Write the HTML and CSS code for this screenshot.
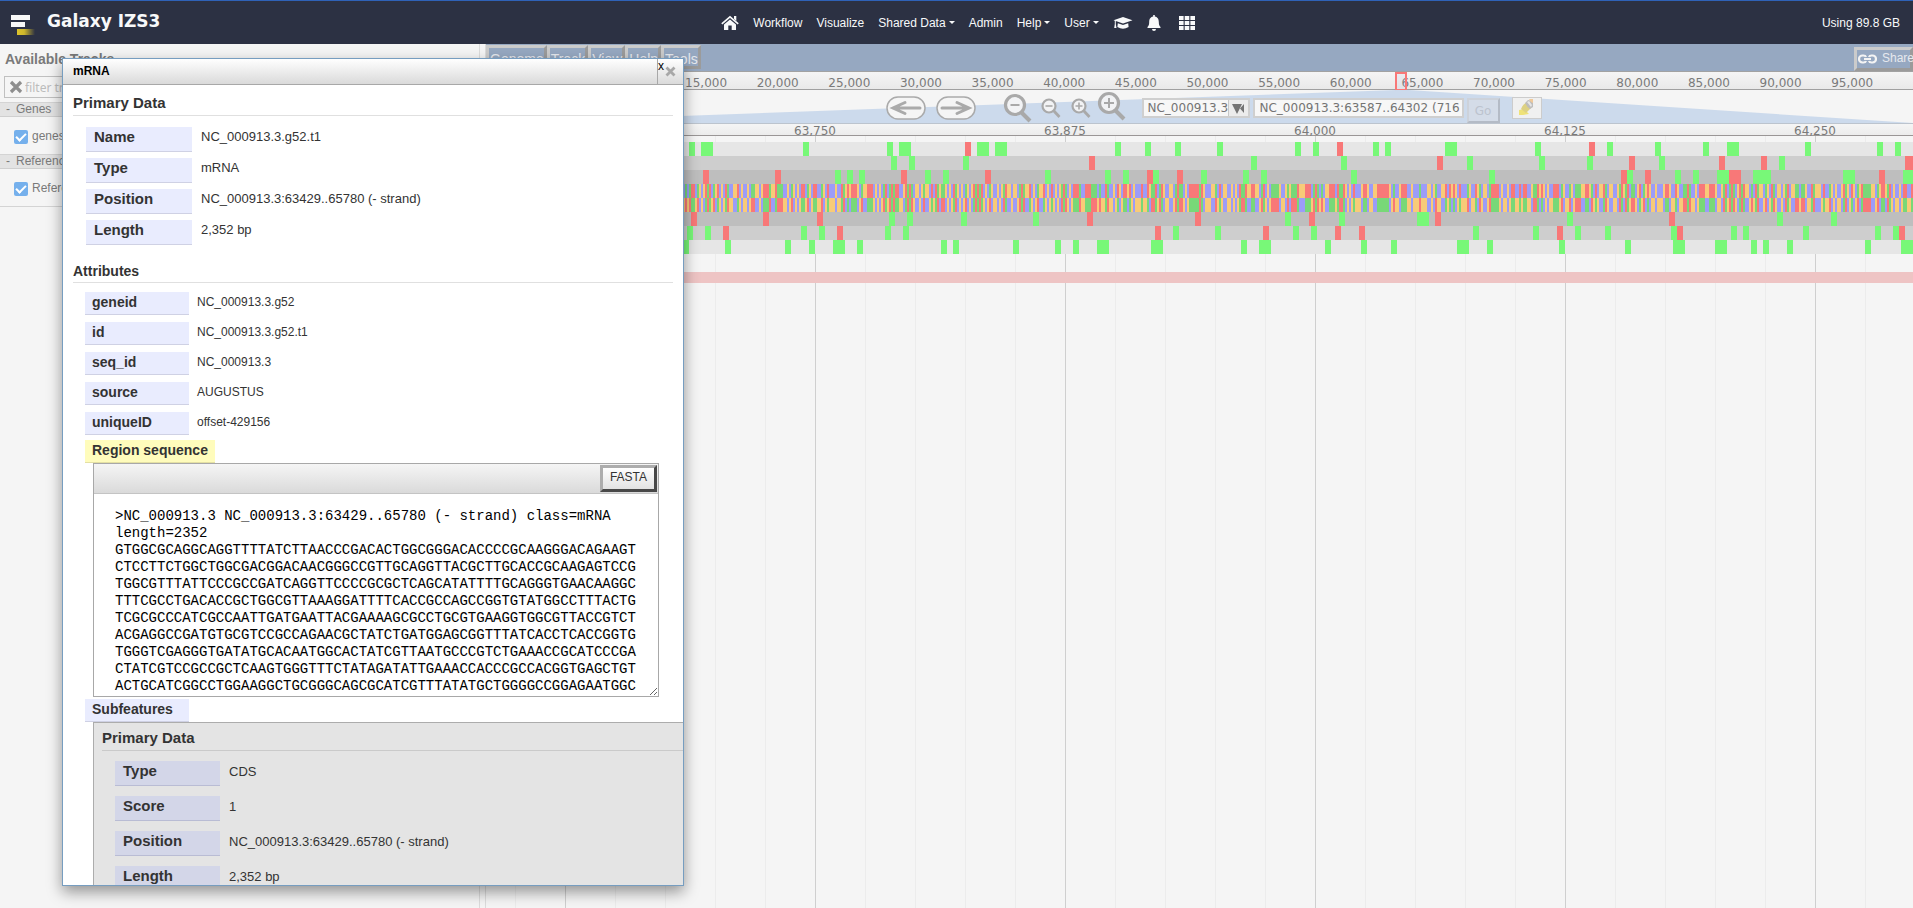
FILE: index.html
```html
<!DOCTYPE html>
<html lang="en">
<head>
<meta charset="utf-8">
<title>Galaxy IZS3</title>
<link rel="stylesheet" href="styles.css">
</head>
<body>
<header class="masthead">
  <a class="brand" href="#">
    <svg class="brand-logo" width="26" height="22" viewBox="0 0 26 22" aria-hidden="true">
      <defs><linearGradient id="gold"><stop offset="0" stop-color="#dcc32c"/><stop offset=".4" stop-color="#cdb62c"/><stop offset="1" stop-color="#2c3143"/></linearGradient></defs>
      <rect x="1" y="1" width="19" height="5" fill="#f8f8f8"/>
      <rect x="1" y="8" width="14" height="5" fill="#f8f8f8"/>
      <rect x="7" y="15" width="18" height="6" fill="url(#gold)"/>
    </svg>
    <span>Galaxy IZS3</span>
  </a>
  <nav class="main-nav">
    <a href="#" aria-label="Home"><svg width="18" height="16" viewBox="0 0 18 16" fill="#f8f9fa"><path d="M9 4.600 15 9.500V15h-4.300v-4.500H7.300V15H3V9.500z"/><path d="M.8 8.800 9 1.900l8.200 6.900" fill="none" stroke="#f8f9fa" stroke-width="1.700"/><path d="M13 1h2.300v5L13 4z"/></svg></a>
    <a href="#">Workflow</a>
    <a href="#">Visualize</a>
    <a class="caret" href="#">Shared Data</a>
    <a href="#">Admin</a>
    <a class="caret" href="#">Help</a>
    <a class="caret" href="#">User</a>
    <a href="#" aria-label="Tours"><svg width="20" height="16" viewBox="0 0 20 16" fill="#f8f9fa"><path d="M10 2 19.500 5.300 10 8.600 2.800 6.100v3l.7 4H1.200l.6-4V5.700L.5 5.300z"/><path d="M4.800 8.300 10 10l5.200-1.700.4 3.700q-5.600 3.500-11.200 0z"/></svg></a>
    <a href="#" aria-label="Notifications"><svg width="14" height="16" viewBox="0 0 14 16" fill="#f8f9fa"><path d="M6.200 0h1.600v1.500C11 2.200 11.800 4.500 11.800 7c0 3 .8 4 1.700 5v1H.5v-1c.9-1 1.700-2 1.700-5 0-2.500.8-4.800 4-5.500zM5 14h4a2 2 0 0 1-4 0z"/></svg></a>
    <a class="apps" href="#" aria-label="Apps"><svg width="16" height="16" viewBox="0 0 16 16" fill="#f8f9fa"><path d="M0 1h4.600v4H0zM5.700 1h4.600v4H5.700zM11.400 1H16v4h-4.600zM0 6h4.600v4H0zM5.700 6h4.600v4H5.700zM11.400 6H16v4h-4.600zM0 11h4.600v4H0zM5.700 11h4.600v4H5.700zM11.400 11H16v4h-4.600z"/></svg></a>
  </nav>
  <a class="quota" href="#">Using 89.8 GB</a>
</header>

<div class="workspace">
  <aside class="tracks">
    <h2>Available Tracks</h2>
    <div class="filter">
      <svg width="14" height="14" viewBox="0 0 14 14"><path d="M2 2l10 10M12 2l-10 10" stroke="#8e8e8e" stroke-width="3.200"/></svg>
      <input type="text" placeholder="filter tracks" aria-label="filter tracks">
    </div>
    <h3><span>-</span>Genes</h3>
    <label><input type="checkbox" checked>genes</label>
    <h3><span>-</span>Reference sequence</h3>
    <label><input type="checkbox" checked>Reference sequence</label>
  </aside>

  <main class="browser">
    <div class="menubar">
      <div class="menus">
        <button type="button">Genome</button><button type="button">Track</button><button type="button">View</button><button type="button">Help</button><button type="button">Tools</button>
      </div>
      <button class="share" type="button"><svg width="19" height="10" viewBox="0 0 19 10" fill="none" stroke="#f4f4f4" stroke-width="2.200"><path d="M8 3Q7.500 1.500 5.500 1.500h-1a3.500 3.500 0 0 0 0 7h1Q7.500 8.500 8 7M11 3q.5-1.500 2.500-1.500h1a3.500 3.500 0 0 1 0 7h-1Q11.500 8.500 11 7M6 5h7"/></svg>Share</button>
    </div>
    <div class="overview">
      <span>5,000</span><span>10,000</span><span>15,000</span><span>20,000</span><span>25,000</span><span>30,000</span><span>35,000</span><span>40,000</span><span>45,000</span><span>50,000</span><span>55,000</span><span>60,000</span><span>65,000</span><span>70,000</span><span>75,000</span><span>80,000</span><span>85,000</span><span>90,000</span><span>95,000</span>
      <i class="viewport"></i>
    </div>
    <div class="navbox">
      <svg class="fan" viewBox="0 0 1427 33" preserveAspectRatio="none" aria-hidden="true"><path d="M0 33 910 0h13l504 33z" fill="#ccdaec"/></svg>
      <div class="controls">
        <button class="pan" type="button" aria-label="Left"><svg width="40" height="24" viewBox="0 0 40 24" fill="none" stroke="#aaa"><rect x="1" y="1" width="38" height="22" rx="11" fill="#f5f5f5" stroke-width="1.500"/><path d="M34 12H7M19 6.500 7 12l12 5.500" stroke-width="3" stroke-linecap="round"/></svg></button>
        <button class="pan" type="button" aria-label="Right"><svg width="40" height="24" viewBox="0 0 40 24" fill="none" stroke="#aaa"><rect x="1" y="1" width="38" height="22" rx="11" fill="#f5f5f5" stroke-width="1.500"/><path d="M6 12h27M21 6.500l12 5.500-12 5.500" stroke-width="3" stroke-linecap="round"/></svg></button>
        <button class="zoom-far" type="button" aria-label="Zoom out far"><svg width="30" height="30" viewBox="0 0 30 30" fill="none" stroke="#a9a9a9"><circle cx="12" cy="12" r="9.500" stroke-width="3.200" fill="#f2f3f5"/><path d="M18 19l9 9" stroke-width="4"/><path d="M7.500 12h9" stroke-width="2"/></svg></button>
        <button class="zoom" type="button" aria-label="Zoom out"><svg width="20" height="20" viewBox="0 0 20 20" fill="none" stroke="#a9a9a9"><circle cx="8" cy="8" r="6.500" stroke-width="2.200" fill="#f2f3f5"/><path d="M12.500 12.500l6 6.500" stroke-width="2.800"/><path d="M4.500 8h7" stroke-width="1.600"/></svg></button>
        <button class="zoom" type="button" aria-label="Zoom in"><svg width="20" height="20" viewBox="0 0 20 20" fill="none" stroke="#a9a9a9"><circle cx="8" cy="8" r="6.500" stroke-width="2.200" fill="#f2f3f5"/><path d="M12.500 12.500l6 6.500" stroke-width="2.800"/><path d="M4.500 8h7M8 4.500v7" stroke-width="1.600"/></svg></button>
        <button class="zoom-near" type="button" aria-label="Zoom in far"><svg width="30" height="30" viewBox="0 0 30 30" fill="none" stroke="#a9a9a9"><circle cx="12" cy="12" r="9.500" stroke-width="3.200" fill="#f2f3f5"/><path d="M18 19l9 9" stroke-width="4"/><path d="M7 12h10M12 7v10" stroke-width="2"/></svg></button>
        <div class="refseq">
          <select aria-label="Reference sequence"><option>NC_000913.3</option></select>
          <svg width="20" height="16" viewBox="0 0 20 16"><rect width="20" height="16" fill="#ececec"/><path d="M0 0v16" stroke="#c8c8c8" stroke-width="2"/><path d="M4 4h10L9 14zM16 4v9l-4-4.500z" fill="#747474"/></svg>
        </div>
        <input class="location" type="text" value="NC_000913.3:63587..64302 (716 b)" aria-label="Location">
        <button class="go" type="button" disabled>Go</button>
        <button class="highlight" type="button" aria-label="Highlight"><svg width="18" height="18" viewBox="0 0 18 18"><path d="M1 11l5-1 5 5-6 1H1z" fill="#efe277"/><path d="M3 10Q5 5 8 4l5 5-5 5z" fill="#ddd183"/><path d="M7 4l3-3 5 1v6l-3 2q-3-2-5-6z" fill="#bdbdbd"/><path d="M9 3l2-1 3 4-1 2z" fill="#e6e6e6"/><path d="M11 0h4v4q-3-1-4-4z" fill="#f0c99a"/></svg></button>
      </div>
    </div>
    <div class="scale"><span>63,750</span><span>63,875</span><span>64,000</span><span>64,125</span><span>64,250</span></div>
    <div class="canvas">
      <svg id="sequence" class="sequence" aria-label="Reference sequence track"></svg>
      <div class="gene"></div>
    </div>
  </main>
</div>

<section class="dialog" role="dialog" aria-labelledby="dialog-title">
  <header class="dialog-bar">
    <h1 id="dialog-title">mRNA</h1>
    <button type="button" aria-label="Close"><span>x</span><svg width="11" height="11" viewBox="0 0 11 11"><path d="M1.500 1.500l8 8M9.500 1.500l-8 8" stroke="#a8a8a8" stroke-width="2.800"/></svg></button>
  </header>
  <div class="dialog-body">
    <h2>Primary Data</h2>
    <dl class="primary">
      <dt>Name</dt><dd>NC_000913.3.g52.t1</dd>
      <dt>Type</dt><dd>mRNA</dd>
      <dt>Position</dt><dd>NC_000913.3:63429..65780 (- strand)</dd>
      <dt>Length</dt><dd>2,352 bp</dd>
    </dl>
    <h2 class="minor">Attributes</h2>
    <dl class="attributes">
      <dt>geneid</dt><dd>NC_000913.3.g52</dd>
      <dt>id</dt><dd>NC_000913.3.g52.t1</dd>
      <dt>seq_id</dt><dd>NC_000913.3</dd>
      <dt>source</dt><dd>AUGUSTUS</dd>
      <dt>uniqueID</dt><dd>offset-429156</dd>
    </dl>
    <label class="tag region-tag" for="fasta">Region sequence</label>
    <div class="fasta">
      <div class="fasta-bar"><button type="button">FASTA</button></div>
      <textarea id="fasta" readonly spellcheck="false">&gt;NC_000913.3 NC_000913.3:63429..65780 (- strand) class=mRNA length=2352
GTGGCGCAGGCAGGTTTTATCTTAACCCGACACTGGCGGGACACCCCGCAAGGGACAGAAGT
CTCCTTCTGGCTGGCGACGGACAACGGGCCGTTGCAGGTTACGCTTGCACCGCAAGAGTCCG
TGGCGTTTATTCCCGCCGATCAGGTTCCCCGCGCTCAGCATATTTTGCAGGGTGAACAAGGC
TTTCGCCTGACACCGCTGGCGTTAAAGGATTTTCACCGCCAGCCGGTGTATGGCCTTTACTG
TCGCGCCCATCGCCAATTGATGAATTACGAAAAGCGCCTGCGTGAAGGTGGCGTTACCGTCT
ACGAGGCCGATGTGCGTCCGCCAGAACGCTATCTGATGGAGCGGTTTATCACCTCACCGGTG
TGGGTCGAGGGTGATATGCACAATGGCACTATCGTTAATGCCCGTCTGAAACCGCATCCCGA
CTATCGTCCGCCGCTCAAGTGGGTTTCTATAGATATTGAAACCACCCGCCACGGTGAGCTGT
ACTGCATCGGCCTGGAAGGCTGCGGGCAGCGCATCGTTTATATGCTGGGGCCGGAGAATGGC</textarea>
    </div>
    <h3 class="tag">Subfeatures</h3>
    <div class="subfeature">
      <h2>Primary Data</h2>
      <dl class="primary">
        <dt>Type</dt><dd>CDS</dd>
        <dt>Score</dt><dd>1</dd>
        <dt>Position</dt><dd>NC_000913.3:63429..65780 (- strand)</dd>
        <dt>Length</dt><dd>2,352 bp</dd>
      </dl>
    </div>
  </div>
</section>
<script src="track.js"></script>
</body>
</html>
```
FILE: styles.css
```css
* { box-sizing: border-box; }

body {
  margin: 0;
  height: 100vh;
  display: flex;
  flex-direction: column;
  overflow: hidden;
  background: #f5f5f5;
  font-family: "Liberation Sans", Arial, sans-serif;
  font-size: 12px;
  color: #333;
}

h1, h2, h3, dl, dd { margin: 0; }
button { font-family: inherit; padding: 0; }
svg { display: block; }

/* Masthead */
.masthead {
  flex: none;
  height: 44px;
  display: grid;
  grid-template-columns: 1fr auto 1fr;
  align-items: center;
  padding: 0 13px 0 10px;
  background: #2c3143;
  border-top: 1px solid #2f62b8;
}
.masthead a { color: #f8f9fa; text-decoration: none; }
.brand {
  display: flex;
  align-items: center;
  gap: 11px;
  font: bold 17px "DejaVu Sans", sans-serif;
}
.brand-logo { margin-top: 4px; }
.brand span { margin-bottom: 3px; }
.main-nav { display: flex; align-items: center; gap: 14px; padding-left: 6px; }
.main-nav .apps { margin-left: 4px; }
.caret::after {
  content: "";
  display: inline-block;
  margin-left: 3px;
  vertical-align: 3px;
  border: 3px solid transparent;
  border-top-color: #f8f9fa;
  border-bottom: 0;
}
.quota { justify-self: end; }

/* Panels */
.workspace { flex: 1; display: flex; min-height: 0; }
.tracks {
  flex: none;
  width: 480px;
  border-right: 1px solid #dcdcdc;
  color: #7a7a7a;
}
.tracks h2 { padding: 7px 5px 0; font-size: 14px; line-height: 16px; }
.filter {
  display: flex;
  align-items: center;
  gap: 2px;
  height: 22px;
  margin: 9px 4px 4px;
  padding-left: 4px;
  border: 1px solid #c0c0c0;
}
.filter input {
  flex: 1;
  border: 0;
  padding: 0;
  background: none;
  font: 12px "Noto Sans", sans-serif;
}
.filter input::placeholder { color: #bcbcbc; }
.tracks h3 {
  display: flex;
  gap: 6px;
  height: 15px;
  padding-left: 6px;
  background: #e3e3e3;
  border-top: 1px solid #d4d4d4;
  border-bottom: 1px solid #cfcfcf;
  font-size: 12px;
  font-weight: normal;
  line-height: 12px;
}
.tracks label {
  display: flex;
  align-items: center;
  gap: 4px;
  height: 37px;
  padding-left: 14px;
}
.tracks label:last-child { height: 38px; border-bottom: 1px solid #d4d4d4; }
.tracks input[type="checkbox"] {
  appearance: none;
  display: grid;
  place-items: center;
  width: 14px;
  height: 14px;
  margin: 2px 0 0;
  border-radius: 2px;
  background: #75b0ec;
}
.tracks input[type="checkbox"]::after {
  content: "";
  width: 4px;
  height: 8px;
  margin-bottom: 2px;
  border: solid #fff;
  border-width: 0 2px 2px 0;
  transform: rotate(45deg);
}
.browser {
  flex: 1;
  min-width: 0;
  display: flex;
  flex-direction: column;
  margin-left: 5px;
  border-left: 1px solid #dcdcdc;
}

/* Menu bar */
.menubar {
  flex: none;
  display: flex;
  justify-content: space-between;
  height: 28px;
  background: #96a8c1;
  border-bottom: 1px solid #a2a2a2;
  overflow: hidden;
}
.menus { display: flex; margin-top: 1px; height: 24px; }
.menubar button {
  padding: 3px 0 0 1px;
  background: none;
  border: 3px solid;
  border-color: #cbcbcb #9b9b9b #9b9b9b #cbcbcb;
  font-size: 14px;
  color: #e6e9ee;
}
.menubar .share {
  display: flex;
  align-items: center;
  gap: 5px;
  width: 59px;
  height: 24px;
  margin-top: 3px;
  padding: 0 0 3px 1px;
  font-size: 12px;
}
.share svg { flex: none; margin-top: 3px; }

/* Rulers and navigation */
.overview {
  position: relative;
  flex: none;
  display: grid;
  grid-template-columns: repeat(19, 1fr);
  height: 18px;
  padding: 0 25px 0 41px;
  background: linear-gradient(#f5f5f5, #e9e9e9);
  border-bottom: 1px solid #a0a0a0;
}
.overview, .scale {
  font: 12px "DejaVu Sans", sans-serif;
  text-align: center;
  color: #7a7a7a;
}
.overview span { line-height: 22px; }
.viewport {
  position: absolute;
  top: 0;
  left: 64%;
  width: 12px;
  height: 19px;
  margin-left: -4px;
  border: 2px solid #f87878;
  background: #aabbe022;
}
.navbox {
  position: relative;
  flex: none;
  height: 34px;
  border-bottom: 1px solid #bcc4ce;
}
.fan { position: absolute; inset: 0; width: 100%; height: 33px; }
.controls {
  position: relative;
  display: flex;
  justify-content: center;
  align-items: center;
  height: 33px;
  padding: 3px 0 0 28px;
}
.controls > button { background: none; border: 0; }
.controls .pan { margin-right: 10px; }
.controls .zoom-far { margin: 0 8px 0 17px; }
.controls .zoom { margin-right: 10px; }
.controls .zoom-near { margin: 0 15px 4px -4px; }
.refseq {
  display: flex;
  width: 108px;
  height: 20px;
  margin-right: 3px;
  border: 2px solid #cfcfcf;
  background: #f7f7f7;
}
.refseq select {
  flex: 1;
  min-width: 0;
  padding: 0 0 0 4px;
  appearance: none;
  background: none;
  border: 0;
}
.refseq svg { flex: none; }
.refseq select, .location {
  font: 12px "DejaVu Sans", sans-serif;
  color: #747474;
}
.location {
  width: 211px;
  height: 20px;
  padding: 0 2px 0 5px;
  border: 2px solid #cfcfcf;
  background: #f7f7f7;
}
.controls .go {
  width: 33px;
  height: 25px;
  margin: 5px 12px 0 3px;
  border: 2px solid;
  border-color: #cdd2da #b4bbc6 #b4bbc6 #cdd2da;
  background: #d4dce8;
  font: 12px "DejaVu Sans", sans-serif;
  color: #bcc3ce;
}
.controls .highlight {
  width: 30px;
  height: 22px;
  padding-left: 5px;
  border: 1px solid #ccc;
  background: #f0f0f0;
}
.scale {
  flex: none;
  display: flex;
  height: 12px;
  padding-left: 204px;
  overflow: visible;
  background: linear-gradient(#f5f5f5, #ececec);
  border-bottom: 1px solid #9a9696;
}
.scale span { flex: none; width: 250px; line-height: 15px; }

/* Track canvas */
.canvas {
  flex: 1;
  padding-top: 6px;
  background:
    linear-gradient(90deg, #cfcfcf 1px, transparent 1px) 79px 0 / 250px 100%,
    linear-gradient(90deg, #ececec 1px, transparent 1px) 29px 0 / 50px 100%;
}
.sequence { width: 100%; height: 112px; }
.gene { height: 11px; margin-top: 18px; background: #eec4c4; }

/* Feature dialog */
.dialog {
  position: absolute;
  top: 58px;
  bottom: 22px;
  left: 62px;
  width: 622px;
  display: flex;
  flex-direction: column;
  overflow: hidden;
  background: #fff;
  border: 1px solid #769dc0;
  box-shadow: 0 6px 14px rgba(0, 0, 0, .4);
}
.dialog-bar {
  flex: none;
  display: flex;
  justify-content: space-between;
  height: 26px;
  background: linear-gradient(#fff, #dadada);
  border-bottom: 1px solid #a8a8a8;
}
.dialog-bar h1 { padding-left: 10px; font-size: 12px; line-height: 24px; color: #000; }
.dialog-bar button {
  display: flex;
  align-items: center;
  gap: 1px;
  width: 26px;
  padding: 0;
  background: none;
  border: 0;
  border-left: 1px solid #a8a8a8;
  font-size: 12px;
  line-height: 14px;
}
.dialog-bar button span { align-self: flex-start; }
.dialog-body { flex: 1; min-height: 0; overflow: hidden; padding-top: 6px; }
.dialog h2 {
  height: 25px;
  margin: 0 10px;
  border-bottom: 1px solid #e0e0e0;
  font-size: 15px;
  line-height: 24px;
}
.dialog h2.minor { height: 24px; margin-top: 14px; font-size: 14px; line-height: 24px; }

.dialog dl { display: grid; }
.dialog dt, .tag {
  background: #e9ecfe;
  border-bottom: 1px solid #cfd1e4;
  font-weight: bold;
}
.primary {
  grid-template-columns: 106px 1fr;
  grid-auto-rows: 25px;
  gap: 6px 9px;
  padding: 11px 0 0 23px;
  font-size: 15px;
}
.primary dt { padding-left: 8px; line-height: 20px; }
.primary dd { font-size: 13px; line-height: 19px; }
.attributes {
  grid-template-columns: 104px 1fr;
  grid-auto-rows: 23px;
  gap: 7px 8px;
  padding: 9px 0 0 22px;
  font-size: 14px;
}
.attributes dt { padding-left: 7px; line-height: 20px; }
.attributes dd { font-size: 12px; line-height: 20px; }
.tag {
  display: block;
  width: 104px;
  height: 23px;
  margin-left: 22px;
  padding-left: 7px;
  font-size: 14px;
  line-height: 20px;
}
.region-tag {
  width: 130px;
  margin-top: 5px;
  background: #fffcbc;
  border-color: #e4e0a4;
}
.fasta {
  width: 566px;
  margin: 0 0 2px 30px;
  border: 1px solid #a8a8a8;
}
.fasta-bar {
  display: flex;
  justify-content: flex-end;
  height: 30px;
  padding: 1px;
  background: linear-gradient(#f5f5f5, #dadada);
  border-bottom: 1px solid #c4c4c4;
}
.fasta-bar button {
  width: 57px;
  height: 27px;
  padding-bottom: 3px;
  border: 3px solid;
  border-color: #adadad #484848 #484848 #adadad;
  background: linear-gradient(#fff, #e2e2e2);
  font-size: 12px;
  color: #333;
}
.fasta textarea {
  display: block;
  width: 100%;
  height: 202px;
  padding: 14px 18px 0 21px;
  border: 0;
  overflow: hidden;
  font: 14px/17px "Liberation Mono", monospace;
  color: #000;
}
.subfeature {
  height: 300px;
  margin-left: 30px;
  padding-top: 3px;
  background: #e4e4e4;
  border: solid #acacac;
  border-width: 1px 0 0 1px;
}
.subfeature h2 { margin: 0 0 0 8px; border-color: #cacaca; }
.subfeature .primary { grid-template-columns: 105px 1fr; row-gap: 10px; padding-left: 21px; padding-top: 10px; }
.subfeature dt { background: #d3d6e8; border-color: #b9bcd4; }
.subfeature dd { line-height: 21px; }
```
FILE: track.js
```
// Reference sequence track: three translation frames above and below the
// two strands. Frame entries are "<x>" for a start codon, "r<x>" for a stop
// codon, with "*n" for n adjacent codons.
const ORIGIN = 486, BASE = 2, ROW = 14;
const GREEN = '#78f878', RED = '#f87878';

const frames = [
  [0, '#e6e6e6', '689 701*2 803 887 899*2 r965 977*2 995*2 1115 1145 1175 1217 1295 1313 r1337 1373 1385 1445*2 1535 r1589 1607 1655 1703 1727*2 1805 1877 1895'],
  [1, '#cecece', '891 909 963 r1089 1251 1341 r1437 1467 1539 1587 r1629 1659 r1719 r1761 1779 r1905*2'],
  [2, '#bebebe', 'r703 r775 835 847 859 r901 925 943 r985 1045 1105 1123 r1147 1153 r1177 1201 1243 1261 1351 1489 r1621 1627 r1645 1675 1693 1717*2 r1729*2 1753*3 1843*2 r1879 1903*2'],
  [5, '#bebebe', 'r691 r763 r817 889 907 961 1033 r1087 r1195 1285 r1309 1339 1417*2 r1435 1567 r1669 1777 1831'],
  [6, '#cecece', '687 705 r723 801 819 r837 885 903 r1155 1173 1215 r1263 1293 1311 r1335 r1359 1473 1533 r1557 1575 1605 1671 r1677 1731 1743 1803 1875 1893 r1899'],
  [7, '#e6e6e6', '683 725 785 809 833*2 857 941 953 1013 1055 1073 1097*2 1151*2 1241 1259*2 1325 1361 1391 1457*2 1487 1559 1625 1673*2 1715*2 1751 1763 1787 1865 1901*2']
];

// Forward strand by base colour (g = A, b = C, o = G, r = T), in tiles.
const tiles = [
  [683, 1081, 'bgbgrrbgoborgrbgorbobrgbboorbobbobggooborrrgoorgggbbobgobobrrbgobrrbbgobrbbbobbrgororrrobgoorrrbobobgrbgrgrrbborgrgboobogoobrbrgoggobobrgobobgoborgrgrbobgobbobogrooboobgrgoorbobgoorbobrbobogrgbobrrrgob'],
  [1081, 1499, 'bbrrrgggbgbbrgbbobrobrrorbobbbrbbroggrbgrobboobgrggbobrrrrrgrobbboogbrboobbobobrggroorroobgrbobggggobbogogggrooorrrbgrgbgboorrrbrggrobobrbbborrobboorrrrrrobgbborrrbbobbbgbbboobogbboorbrorobrbbbgobbrogboobgrrrr'],
  [1499, 1923, 'bobbobrrbbrbrrbboggrorobobbrrrbgobbgobgggoorrogbrboorgboobbogrogrbggborbgorobbobbborrobbrobbggrgbbobrrroorrrobbogrbgrgborgroobgbrgoobgobrgboobogrbooggbggobbrgooobrbbgobobborgobrobgorggggoobgorrogr']
];

const fill = { g: '#78d878', b: '#9c9cf8', o: '#f8cb78', r: '#f87878' };
const pair = { g: 'r', b: 'o', o: 'b', r: 'g' };

const svg = document.getElementById('sequence');
function rect(x, row, width, color) {
  const r = document.createElementNS('http://www.w3.org/2000/svg', 'rect');
  r.setAttribute('x', x);
  r.setAttribute('y', row * ROW);
  r.setAttribute('width', width);
  r.setAttribute('height', ROW);
  r.setAttribute('fill', color);
  svg.appendChild(r);
}

for (const [row, color, codons] of frames) {
  rect(0, row, '100%', color);
  for (const codon of codons.split(' ')) {
    const [, stop, x, count] = codon.match(/(r?)(\d+)\*?(\d*)/);
    rect(x - ORIGIN, row, 6 * (count || 1), stop ? RED : GREEN);
  }
}
for (const [start, end, bases] of tiles) {
  for (let x = start, i = 0; x < end; x += BASE, i++) {
    const base = bases[i % bases.length];
    rect(x - ORIGIN, 3, BASE, fill[base]);
    rect(x - ORIGIN, 4, BASE, fill[pair[base]]);
  }
}
```
